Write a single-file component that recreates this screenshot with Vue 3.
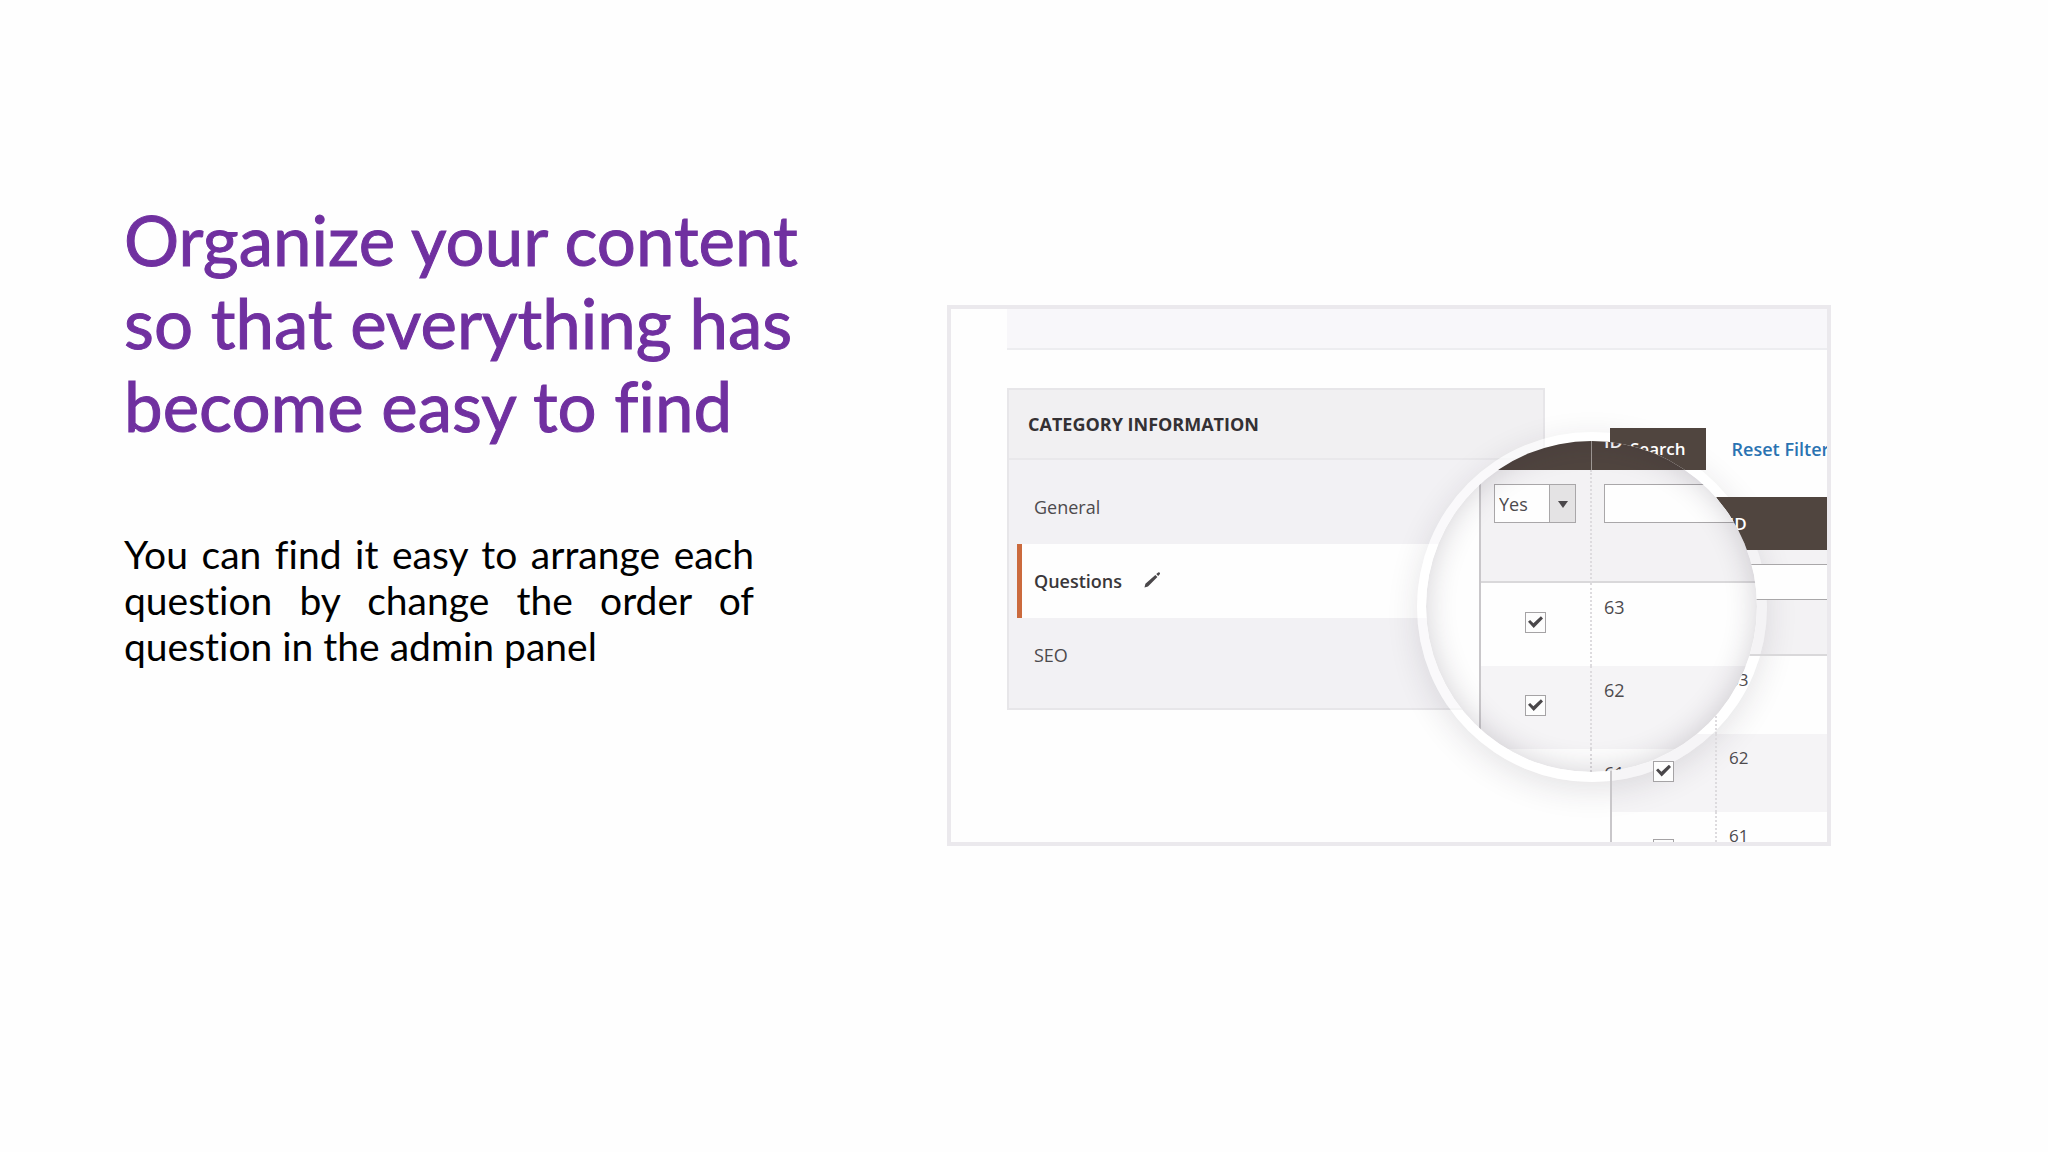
<script setup>
import { ref } from 'vue'

const sections = ['General', 'Questions', 'SEO']
const active = 'Questions'

const questions = ref([
  { id: 63, picked: true },
  { id: 62, picked: true },
  { id: 61, picked: false }
])
const assigned = ref('Yes')
const idFilter = ref('')
</script>

<template>
  <main class="slide">
    <section class="copy">
      <h1>Organize your content<br>so that everything has<br>become easy to find</h1>
      <p>You can find it easy to arrange each question by change the order of question in the admin panel</p>
    </section>

    <section class="shot" aria-label="Category questions">
      <div class="strip"></div>
      <div class="body">
        <nav class="side">
          <h2>CATEGORY INFORMATION</h2>
          <a v-for="s in sections" :key="s" href="#" :class="{ active: s === active }">
            {{ s }}
            <svg v-if="s === active" class="pencil" viewBox="0 0 18 18" aria-hidden="true">
              <path d="M0.500 17.500l1-4L12 4.200l2.200 2.200L4.200 16.300zM13 3.300l2-1.800q0.800-0.500 1.400 0.100l0.300 0.300q0.600 0.700 0 1.500L15 5.400z" fill="#4a474a" />
            </svg>
          </a>
        </nav>

        <div class="results">
          <div class="tools">
            <button type="button">Search</button>
            <a href="#">Reset Filter</a>
          </div>
          <table class="grid">
            <thead>
              <tr><th class="pick"></th><th>ID</th></tr>
            </thead>
            <tbody>
              <tr class="filter">
                <td class="pick"></td>
                <td><input v-model="idFilter" type="text" aria-label="Filter by ID"></td>
              </tr>
              <tr v-for="q in questions" :key="q.id">
                <td class="pick"><input v-model="q.picked" type="checkbox" :aria-label="'Question ' + q.id"></td>
                <td>{{ q.id }}</td>
              </tr>
            </tbody>
          </table>
        </div>
      </div>

      <div class="ring"></div>
      <div class="lens">
        <table class="grid zoomed">
          <thead>
            <tr><th class="pick"></th><th>ID</th></tr>
          </thead>
          <tbody>
            <tr class="filter">
              <td class="pick">
                <span class="drop">
                  <select v-model="assigned" aria-label="Assigned">
                    <option>Yes</option>
                    <option>No</option>
                  </select>
                </span>
              </td>
              <td><input v-model="idFilter" type="text" aria-label="Filter by ID, magnified"></td>
            </tr>
            <tr v-for="q in questions" :key="q.id">
              <td class="pick"><input v-model="q.picked" type="checkbox" :aria-label="'Question ' + q.id + ', magnified'"></td>
              <td>{{ q.id }}</td>
            </tr>
          </tbody>
        </table>
      </div>
    </section>
  </main>
</template>

<style>
body {
  margin: 0;
  background: #fefefe;
}
</style>

<style scoped>
* {
  box-sizing: border-box;
}

.slide {
  display: grid;
  grid-template-columns: 823fr 884fr;
  align-items: start;
  padding: 198px 217px 0 124px;
}

.copy h1 {
  margin: 0;
  font: 400 69px/83px Lato, sans-serif;
  font-variant-ligatures: none;
  color: #7030a0;
  white-space: nowrap;
  -webkit-text-stroke: 1px #7030a0;
}

.copy p {
  max-width: 630px;
  margin: 84px 0 0;
  font: 400 39px/46px Lato, sans-serif;
  font-variant-ligatures: none;
  color: #000;
  text-align: justify;
}

.shot {
  position: relative;
  aspect-ratio: 884 / 541;
  margin-top: 107px;
  border: 4px solid #ebe9ed;
  overflow: hidden;
  background: #fefefe;
  font: 400 18px/24px "Open Sans", sans-serif;
  color: #4d4a4d;
}

.strip {
  height: 41px;
  margin-left: 56px;
  border-bottom: 2px solid #ededf0;
  background: #f8f7fa;
}

.body {
  display: flex;
  align-items: flex-start;
  gap: 65px;
  padding-left: 56px;
}

.side {
  flex: 1;
  margin-top: 38px;
  padding-bottom: 16px;
  border: 2px solid #e7e6e9;
  background: #f2f1f4;
}

.side h2 {
  margin: 0 0 10px;
  padding: 22px 19px;
  border-bottom: 2px solid #e9e8eb;
  font: 700 18px/24px "Open Sans", sans-serif;
  color: #343134;
  background: #f1f0f2;
}

.side a {
  display: flex;
  align-items: center;
  gap: 22px;
  height: 74px;
  margin-left: 8px;
  padding-left: 17px;
  color: inherit;
  text-decoration: none;
}

.side a.active {
  padding-left: 12px;
  border-left: 5px solid #cb6a3d;
  background: #fefefe;
  font-weight: 600;
  color: #3a373a;
}

.pencil {
  width: 17px;
  height: 17px;
  margin-bottom: 4px;
}

.results {
  position: relative;
  z-index: 2;
  flex: 0 0 217px;
  min-width: 0;
  margin-top: 78px;
}

.tools {
  display: flex;
  align-items: center;
  gap: 26px;
  margin-bottom: 27px;
  white-space: nowrap;
}

.tools button {
  flex: none;
  height: 42px;
  padding: 0 20px;
  border: 0;
  background: #50453f;
  font: 600 17px/24px "Open Sans", sans-serif;
  color: #fff;
}

.tools a {
  font-weight: 600;
  color: #2a73b2;
  text-decoration: none;
}

.grid {
  width: 400px;
  table-layout: fixed;
  border-collapse: separate;
  border-spacing: 0;
  border-left: 2px solid #c9c7ca;
  font-size: 17px;
}

.grid th {
  height: 53px;
  padding: 0 12px;
  background: #50453f;
  font-weight: 600;
  text-align: left;
  color: #fff;
}

.grid td {
  height: 78px;
  padding: 12px;
  vertical-align: top;
}

.grid .pick {
  width: 105px;
  padding: 0;
  border-right: 2px dotted #dddbde;
  text-align: center;
  vertical-align: middle;
}

.grid td.pick {
  padding-bottom: 4px;
}

.grid th.pick {
  border-right: 1px solid #a09a96;
}

.grid .filter td {
  height: 106px;
  padding-top: 14px;
  border-bottom: 2px solid #d9d8da;
  background: rgba(40, 20, 60, 0.05);
  vertical-align: top;
}

.grid tbody tr:nth-child(3) td {
  background: rgba(40, 20, 60, 0.045);
}

.grid input[type='text'] {
  display: block;
  width: 100%;
  height: 36px;
  border: 1px solid #a9a7a9;
  background: #fefefe;
}

.grid input[type='checkbox'] {
  display: block;
  appearance: none;
  width: 21px;
  height: 21px;
  margin: 0 auto;
  border: 1px solid #a5a3a5;
  background: #fdfdfd;
}

.grid input[type='checkbox']:checked::before {
  content: '';
  display: block;
  width: 15px;
  height: 12px;
  margin: 3px 2px;
  background: #4a474a;
  clip-path: polygon(0 48%, 14% 34%, 36% 60%, 86% 2%, 100% 20%, 38% 100%);
}

.ring,
.lens {
  position: absolute;
  border-radius: 50%;
}

.ring {
  z-index: 1;
  top: 123px;
  right: 60px;
  width: 350px;
  height: 350px;
  background: rgba(255, 255, 255, 0.6);
  box-shadow: 0 8px 32px rgba(40, 30, 50, 0.12);
}

.lens {
  z-index: 3;
  top: 132px;
  right: 70px;
  width: 331px;
  height: 331px;
  overflow: hidden;
  background: #fefefe;
}

.lens::after {
  content: '';
  position: absolute;
  inset: 0;
  border-radius: 50%;
  box-shadow: inset 0 0 30px rgba(40, 30, 50, 0.2);
  pointer-events: none;
}

.zoomed {
  margin-left: 53px;
  font-size: 18px;
}

.zoomed th {
  height: 29px;
  line-height: 0;
  vertical-align: top;
}

.zoomed .pick {
  width: 111px;
}

.zoomed td {
  height: 83px;
}

.zoomed .filter td {
  height: 113px;
}

.drop {
  position: relative;
  display: block;
  width: 82px;
  height: 39px;
  margin-left: 13px;
  border: 1px solid #a9a7a9;
  background: linear-gradient(90deg, #fefefe 54px, #a9a7a9 54px, #a9a7a9 55px, #e4e3e4 55px);
}

.drop::after {
  content: '';
  position: absolute;
  top: 16px;
  right: 7px;
  border: 5px solid transparent;
  border-top: 7px solid #4a474a;
  pointer-events: none;
}

.drop select {
  display: block;
  appearance: none;
  width: 100%;
  height: 100%;
  padding: 0 4px;
  border: 0;
  background: transparent;
  font: 400 18px/24px "Open Sans", sans-serif;
  color: #4d4a4d;
}

.zoomed input[type='text'] {
  height: 39px;
}
</style>
